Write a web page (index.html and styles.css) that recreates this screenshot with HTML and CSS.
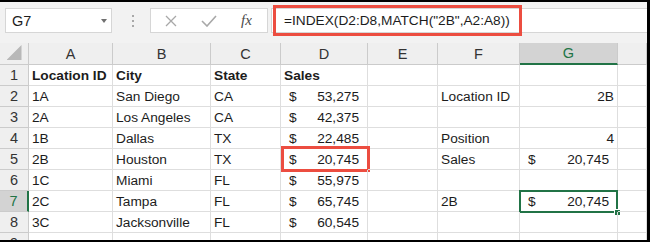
FILE: index.html
```html
<!DOCTYPE html>
<html lang="en">
<head>
    <meta charset="UTF-8">
    <title>INDEX MATCH</title>
    <link rel="stylesheet" href="styles.css">
</head>
<body>
<div class="sheet">
    <div class="toolbar">
        <div class="namebox"><span>G7</span><span class="caret"></span></div>
        <div class="dots"><i></i><i></i><i></i></div>
        <div class="fxbox">
            <svg class="ico-x" width="12" height="12" viewBox="0 0 12 12"><path d="M1 1L11 11M11 1L1 11" stroke="#a8a8a8" stroke-width="1.3" fill="none"/></svg>
            <svg class="ico-ok" width="16" height="12" viewBox="0 0 16 12"><path d="M1 6L6 11L15 1" stroke="#a8a8a8" stroke-width="1.6" fill="none"/></svg>
            <span class="fx">fx</span>
        </div>
        <div class="formula"><span class="mark"></span>=INDEX(D2:D8,MATCH("2B",A2:A8))</div>
    </div>
    <div class="grid">
        <div class="hd corner"><span class="tri"></span></div>
        <div class="hd">A</div><div class="hd">B</div><div class="hd">C</div><div class="hd">D</div>
        <div class="hd">E</div><div class="hd">F</div><div class="hd on">G</div><div class="hd"></div>

        <div class="rh">1</div>
        <div class="b">Location ID</div><div class="b">City</div><div class="b">State</div><div class="b">Sales</div>
        <div></div><div></div><div></div><div></div>

        <div class="rh">2</div>
        <div>1A</div><div>San Diego</div><div>CA</div><div class="num"><span>$</span><span>53,275</span></div>
        <div></div><div>Location ID</div><div class="r">2B</div><div></div>

        <div class="rh">3</div>
        <div>2A</div><div>Los Angeles</div><div>CA</div><div class="num"><span>$</span><span>42,375</span></div>
        <div></div><div></div><div></div><div></div>

        <div class="rh">4</div>
        <div>1B</div><div>Dallas</div><div>TX</div><div class="num"><span>$</span><span>22,485</span></div>
        <div></div><div>Position</div><div class="r">4</div><div></div>

        <div class="rh">5</div>
        <div>2B</div><div>Houston</div><div>TX</div><div class="num"><span>$</span><span>20,745</span><span class="callout"></span></div>
        <div></div><div>Sales</div><div class="num"><span>$</span><span>20,745</span></div><div></div>

        <div class="rh">6</div>
        <div>1C</div><div>Miami</div><div>FL</div><div class="num"><span>$</span><span>55,975</span></div>
        <div></div><div></div><div></div><div></div>

        <div class="rh on">7</div>
        <div>2C</div><div>Tampa</div><div>FL</div><div class="num"><span>$</span><span>65,745</span></div>
        <div></div><div>2B</div><div class="num"><span>$</span><span>20,745</span><span class="sel"></span></div><div></div>

        <div class="rh">8</div>
        <div>3C</div><div>Jacksonville</div><div>FL</div><div class="num"><span>$</span><span>60,545</span></div>
        <div></div><div></div><div></div><div></div>

        <div class="rh">9</div>
        <div></div><div></div><div></div><div></div>
        <div></div><div></div><div></div><div></div>
    </div>
</div>
</body>
</html>
```

FILE: styles.css
```css
body{
    margin: 0;
}
.sheet{
    width: 650px;
    height: 242px;
    box-sizing: border-box;
    border-top: 2px solid #000;
    border-right: 3px solid #000;
    border-bottom: 2px solid #000;
    overflow: hidden;
    background: #fff;
    font-family: "Liberation Sans", Arial, sans-serif;
    font-size: 13.7px;
    color: #1c1c1c;
}

/* formula bar */
.toolbar{
    height: 41px;
    box-sizing: border-box;
    background: #f2f2f2;
    display: flex;
    align-items: flex-start;
    padding: 6px 0 0 5px;
}
.namebox{
    width: 107px;
    height: 25px;
    box-sizing: border-box;
    background: #fff;
    border: 1px solid #d6d6d6;
    display: flex;
    align-items: center;
    justify-content: space-between;
    padding: 0 4px 0 6px;
    font-size: 14.5px;
}
.caret{
    border-left: 3.5px solid transparent;
    border-right: 3.5px solid transparent;
    border-top: 4px solid #707070;
}
.dots{
    height: 25px;
    display: flex;
    flex-direction: column;
    justify-content: center;
    gap: 3px;
    margin: 0 16px 0 20px;
}
.dots i{
    width: 2px;
    height: 2px;
    background: #a8a8a8;
}
.fxbox{
    width: 118px;
    height: 25px;
    box-sizing: border-box;
    background: #fff;
    border: 1px solid #d6d6d6;
    display: flex;
    align-items: center;
    padding-left: 14px;
}
.ico-x{
    margin-right: 24px;
}
.fx{
    margin-left: 24px;
    font-family: "Liberation Serif", serif;
    font-style: italic;
    font-size: 15px;
    color: #4a4a4a;
}
.formula{
    flex: 1;
    height: 25px;
    box-sizing: border-box;
    margin-left: 3px;
    background: #fff;
    border: 1px solid #d6d6d6;
    border-right: 0;
    position: relative;
    padding-left: 12px;
    line-height: 23px;
    white-space: nowrap;
}
.mark{
    position: absolute;
    left: 1px;
    top: -4px;
    width: 249px;
    height: 31px;
    box-sizing: border-box;
    border: 3px solid #ec4d40;
}

/* cells */
.grid{
    display: grid;
    grid-template-columns: 29px 84px 98px 70px 87px 70px 82px 98px 1fr;
    grid-template-rows: 22px;
    grid-auto-rows: 21px;
}
.grid > div{
    box-sizing: border-box;
    border-right: 1px solid #dedede;
    border-bottom: 1px solid #dedede;
    display: flex;
    align-items: center;
    padding: 0 3px;
    white-space: nowrap;
    position: relative;
}
.grid > .hd,
.grid > .rh{
    background: #efefef;
    justify-content: center;
    color: #333;
    border-color: #cbcbcb;
    font-size: 14.5px;
}
.grid > .hd.on{
    background: #d3d3d3;
    color: #217346;
    border-bottom: 2px solid #217346;
}
.grid > .rh.on{
    background: #d3d3d3;
    color: #217346;
    border-right: 2px solid #217346;
}
.corner{
    align-items: flex-end;
}
.tri{
    width: 15px;
    height: 15px;
    margin: 0 0 2px 0;
    background: #b8b8b8;
    clip-path: polygon(100% 0, 100% 100%, 0 100%);
}
.grid > .b{
    font-weight: bold;
}
.grid > .num{
    justify-content: space-between;
    padding: 0 8px;
}
.grid > .r{
    justify-content: flex-end;
}
.callout{
    position: absolute;
    left: 0;
    top: -3px;
    right: -3px;
    bottom: -3px;
    border: 3px solid #ec4d40;
}
.sel{
    position: absolute;
    left: -1px;
    top: -1px;
    right: -1px;
    bottom: -2px;
    border: 2px solid #217346;
}
.sel::after{
    content: "";
    position: absolute;
    right: -5px;
    bottom: -5px;
    width: 5px;
    height: 5px;
    background: #217346;
    border: 1px solid #fff;
}
```
